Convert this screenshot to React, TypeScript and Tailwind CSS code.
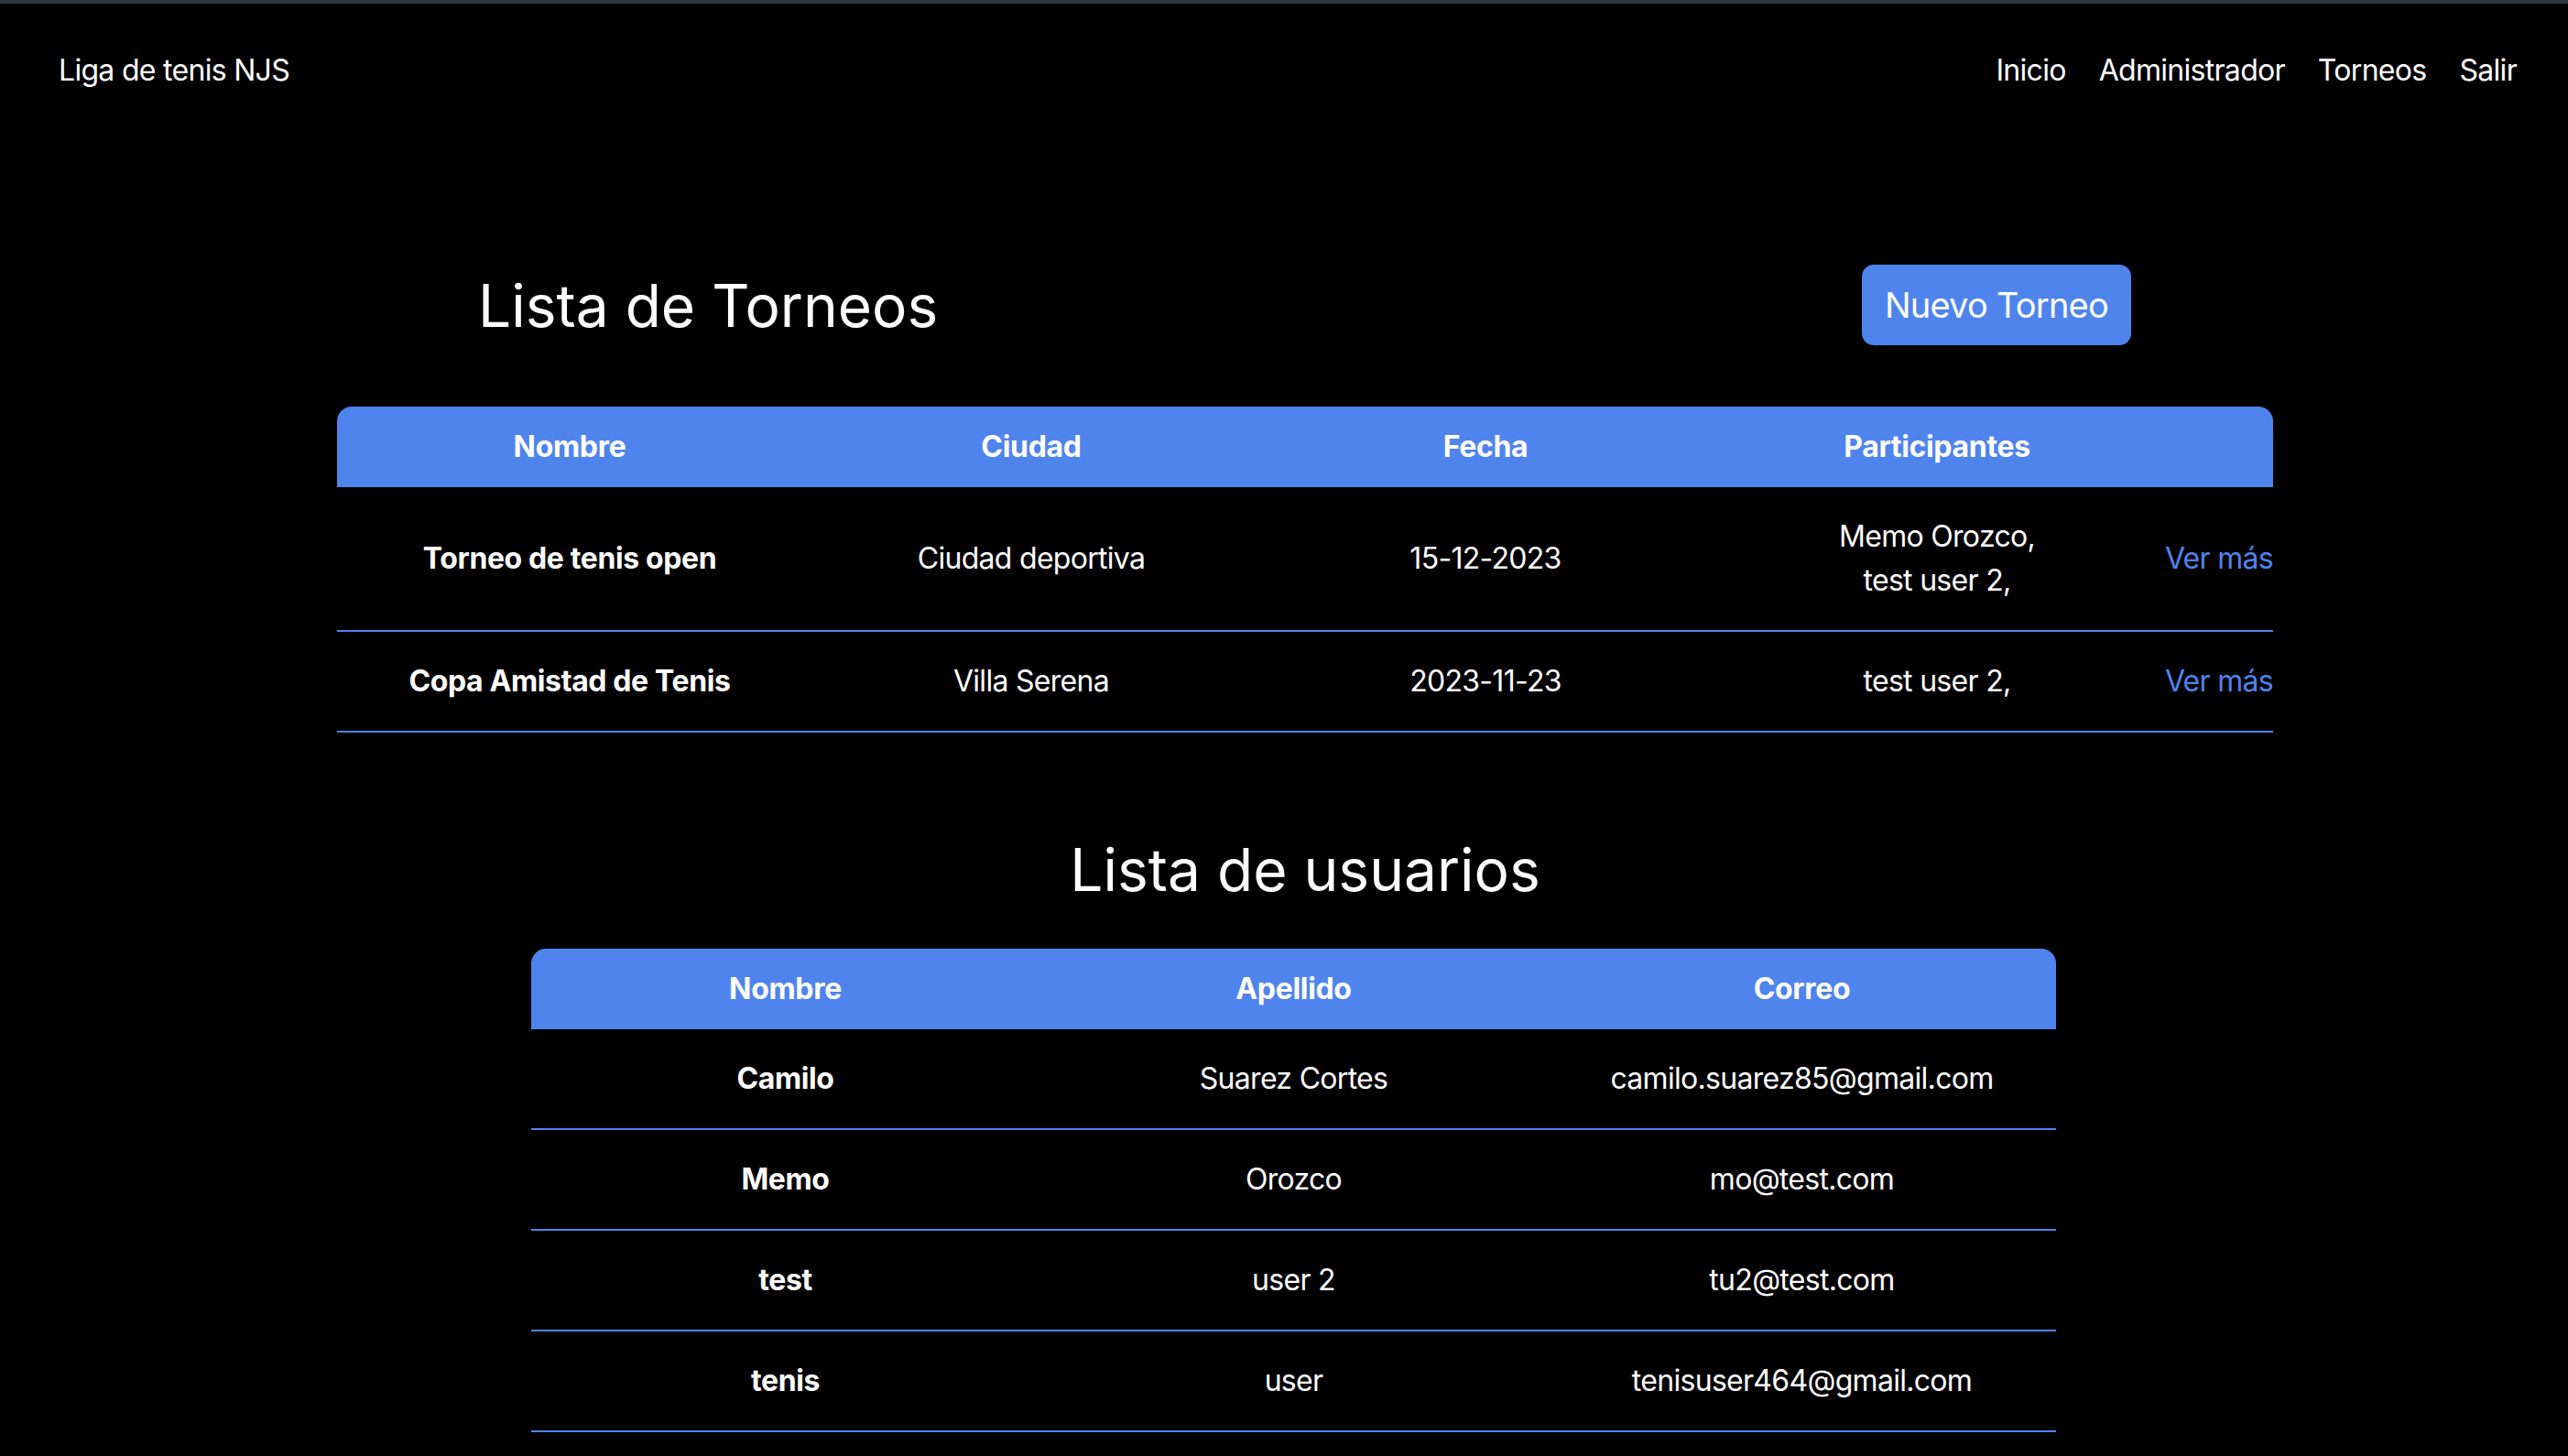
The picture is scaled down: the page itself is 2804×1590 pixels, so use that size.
import React from 'react';

const torneos = [
  { nombre: 'Torneo de tenis open', ciudad: 'Ciudad deportiva', fecha: '15-12-2023', participantes: ['Memo Orozco,', 'test user 2,'] },
  { nombre: 'Copa Amistad de Tenis', ciudad: 'Villa Serena', fecha: '2023-11-23', participantes: ['test user 2,'] },
];

const usuarios = [
  { nombre: 'Camilo', apellido: 'Suarez Cortes', correo: 'camilo.suarez85@gmail.com' },
  { nombre: 'Memo', apellido: 'Orozco', correo: 'mo@test.com' },
  { nombre: 'test', apellido: 'user 2', correo: 'tu2@test.com' },
  { nombre: 'tenis', apellido: 'user', correo: 'tenisuser464@gmail.com' },
];

const App = () => {
  return (
    <div className="min-h-screen bg-black text-white font-['Inter','Noto_Sans',sans-serif] text-[32px] leading-[48px] tracking-[-0.022em]">
      <div className="h-[4px] bg-[#30343f]" />

      <nav className="flex items-center justify-between h-[146px] pl-[64px] pr-[56px]">
        <span>Liga de tenis NJS</span>
        <div className="flex items-center gap-[36px]">
          <a>Inicio</a>
          <a>Administrador</a>
          <a>Torneos</a>
          <a>Salir</a>
        </div>
      </nav>

      <div className="flex items-center h-[88px] mt-[139px]">
        <h1 className="ml-[522px] text-[64px] leading-[77px] tracking-normal">Lista de Torneos</h1>
        <button className="ml-auto mr-[477px] h-[88px] px-[25px] rounded-[13px] bg-[#4f84ed] text-[38px] leading-[48px] tracking-[-0.02em]">
          Nuevo Torneo
        </button>
      </div>

      <div className="ml-[368px] w-[2114px] mt-[67px]">
        <div className="grid grid-cols-[508px_500px_492px_494px_120px] h-[88px] items-center rounded-t-[16px] bg-[#4f84ed] font-bold text-center tracking-[-0.01em]">
          <span>Nombre</span>
          <span>Ciudad</span>
          <span>Fecha</span>
          <span>Participantes</span>
          <span />
        </div>
        {torneos.map((t) => (
          <div
            key={t.nombre}
            className="grid grid-cols-[508px_500px_492px_494px_120px] items-center py-[30px] border-b-2 border-[#4f84ed] text-center"
          >
            <span className="font-bold tracking-[-0.012em]">{t.nombre}</span>
            <span>{t.ciudad}</span>
            <span>{t.fecha}</span>
            <div className="flex flex-col">
              {t.participantes.map((p) => (
                <span key={p}>{p}</span>
              ))}
            </div>
            <a className="text-right text-[#4f84ed] whitespace-nowrap">Ver más</a>
          </div>
        ))}
      </div>

      <h2 className="ml-[368px] w-[2114px] mt-[111px] text-center text-[64px] leading-[77px] tracking-normal">Lista de usuarios</h2>

      <div className="ml-[580px] w-[1665px] mt-[48px]">
        <div className="grid grid-cols-3 h-[88px] items-center rounded-t-[16px] bg-[#4f84ed] font-bold text-center tracking-[-0.01em]">
          <span>Nombre</span>
          <span>Apellido</span>
          <span>Correo</span>
        </div>
        {usuarios.map((u) => (
          <div key={u.correo} className="grid grid-cols-3 items-center py-[30px] border-b-2 border-[#4f84ed] text-center">
            <span className="font-bold tracking-[-0.012em]">{u.nombre}</span>
            <span>{u.apellido}</span>
            <span>{u.correo}</span>
          </div>
        ))}
      </div>
    </div>
  );
};

export default App;
